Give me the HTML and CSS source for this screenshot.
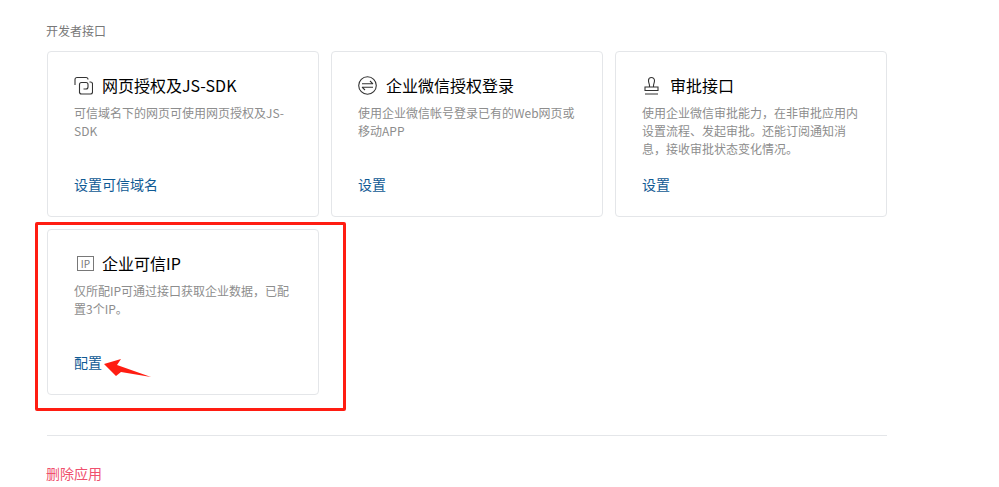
FILE: index.html
```html
<!DOCTYPE html>
<html lang="zh-CN">
<head>
<meta charset="utf-8">
<title>开发者接口</title>
<link rel="stylesheet" href="styles.css">
</head>
<body>
<main class="page">
  <h2 class="section-title">开发者接口</h2>
  <div class="grid">
    <section class="card">
      <h3 class="card-title">
        <svg class="icon" viewBox="0 0 19 19"><path d="M1 9V3.500a2 2 0 0 1 2-2h9a2 2 0 0 1 2 2M5.500 17V8.500a2 2 0 0 1 2-2h4.500a2 2 0 0 1 2 2v2.500a2 2 0 0 1-2 2H9.500M15.500 6h1a2 2 0 0 1 2 2v8a2 2 0 0 1-2 2H7.500a2 2 0 0 1-2-2"/></svg>
        网页授权及JS-SDK
      </h3>
      <p class="desc">可信域名下的网页可使用网页授权及JS-SDK</p>
      <a class="link">设置可信域名</a>
    </section>
    <section class="card">
      <h3 class="card-title">
        <svg class="icon" viewBox="0 0 19 19"><circle cx="9.500" cy="9.500" r="8.800"/><path d="M4 7.800h11M12 5l3 2.800M15 11.200H4M7 14l-3-2.800"/></svg>
        企业微信授权登录
      </h3>
      <p class="desc">使用企业微信帐号登录已有的Web网页或移动APP</p>
      <a class="link">设置</a>
    </section>
    <section class="card">
      <h3 class="card-title">
        <svg class="icon" viewBox="0 0 19 19"><path d="M7.500 11V9.500C7.500 8 6.500 7 6.500 4.500a3 3 0 0 1 6 0C12.500 7 11.500 8 11.500 9.500V11M3 11h13v3.500H3zM3 18h13"/></svg>
        审批接口
      </h3>
      <p class="desc">使用企业微信审批能力，在非审批应用内设置流程、发起审批。还能订阅通知消息，接收审批状态变化情况。</p>
      <a class="link">设置</a>
    </section>
    <section class="card">
      <h3 class="card-title">
        <span class="ip-icon">IP</span>
        企业可信IP
      </h3>
      <p class="desc">仅所配IP可通过接口获取企业数据，已配置3个IP。</p>
      <a class="link">配置</a>
    </section>
  </div>
  <hr class="divider">
  <a class="danger">删除应用</a>
</main>
<div class="mark-box"></div>
<svg class="mark-arrow" viewBox="0 0 50 20"><path d="M1 6 18 1 14 7 48 19 18 14 13 18Z"/></svg>
</body>
</html>
```
FILE: styles.css
```css
* { box-sizing: border-box; }
html, body { margin: 0; height: 487px; overflow: hidden; background: #fff; }
body {
  font-family: "Noto Sans CJK SC", "Open Sans", sans-serif;
  color: #000;
  position: relative;
}
.page { width: 840px; margin-left: 47px; padding-top: 22px; }
.section-title {
  margin: 0 0 11px -1px;
  font-size: 12px;
  line-height: 18px;
  font-weight: 400;
  color: #787878;
}
.grid {
  display: grid;
  grid-template-columns: repeat(3, 272px);
  grid-auto-rows: 166px;
  gap: 12px;
}
.card {
  border: 1px solid #e4e6e9;
  border-radius: 4px;
  padding: 21px 26px 0;
  position: relative;
  display: flex;
  flex-direction: column;
}
.card-title {
  margin: 0 0 7px;
  height: 24px;
  font-size: 16px;
  line-height: 24px;
  font-weight: 400;
  color: #000;
  display: flex;
  align-items: center;
  gap: 9px;
}
.icon {
  width: 19px;
  height: 19px;
  fill: none;
  stroke: #333;
  stroke-width: 1.100;
  flex: none;
}
.ip-icon {
  width: 17px;
  height: 15px;
  margin-left: 3px;
  margin-right: -1px;
  border: 1px solid #787878;
  color: #787878;
  font-size: 10px;
  line-height: 13px;
  text-align: center;
  flex: none;
}
.desc {
  margin: 0;
  font-size: 12px;
  line-height: 18px;
  color: #8d8d8d;
  height: 54px;
  width: 220px;
}
.link {
  margin-top: 16px;
  font-size: 14px;
  line-height: 20px;
  color: #0f5a94;
}
.divider {
  margin: 40px 0 0;
  border: 0;
  border-top: 1px solid #e4e6e9;
}
.danger {
  display: block;
  margin-top: 27px;
  margin-left: -1px;
  font-size: 14px;
  line-height: 20px;
  color: #f0506e;
}
.mark-box {
  position: absolute;
  left: 35px;
  top: 222px;
  width: 311px;
  height: 189px;
  border: 3px solid #ff1d12;
  border-radius: 2px;
}
.mark-arrow {
  position: absolute;
  left: 103px;
  top: 358px;
  width: 50px;
  height: 20px;
  fill: #ff1d12;
}
```
